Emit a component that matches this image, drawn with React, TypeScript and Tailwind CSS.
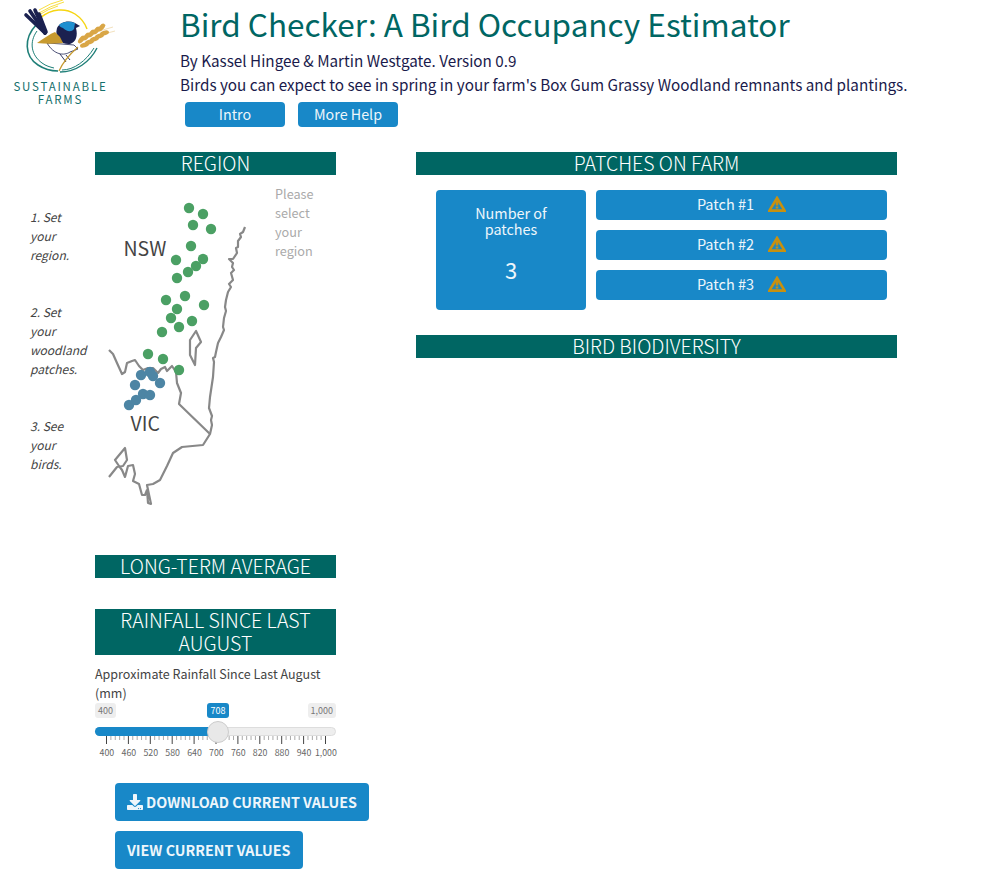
import React from "react";
import { FaDownload } from "react-icons/fa";

const FONT = '"Noto Sans CJK SC", "Noto Sans", sans-serif';

const green: [number, number][] = [[189,208],[203,214],[193,225],[211,229],[191,246],[176,260],[203,259],[196,266],[188,272],[177,278],[185,296],[166,300],[204,305],[177,309],[171,318],[192,321],[179,327],[162,332],[148,354],[163,359],[179,370]];
const blue: [number, number][] = [[141,375],[150,372],[153,376],[160,383],[135,385],[143,394],[150,395],[136,400],[129,405]];

const grains: [number, number][] = [[83,43],[88,40],[93,37],[98,34],[103,31]];

function Logo() {
  return (
    <svg viewBox="0 0 120 76" className="block w-[120px] h-[76px]">
      <g fill="none" stroke="#f6d512">
        <path d="M39 10 Q50 3 63 0" strokeWidth="0.8" />
        <path d="M39 13 Q50 6 64 2" strokeWidth="0.8" />
        <path d="M39 15 Q48 9 58 6" strokeWidth="0.8" />
        <path d="M40 18 C52 8 66 8 75 14 C81 18 85 23 87 29" strokeWidth="1.5" />
      </g>
      <g fill="none" stroke="#1f7f78">
        <path d="M36 25 C24 38 24 56 38 65 C44 69 51 71 58 71" strokeWidth="1.6" />
        <path d="M37 31 C29 42 31 55 42 63 C46 66 50 67 54 68" strokeWidth="1" />
        <path d="M60 72 C76 72 90 62 97 48" strokeWidth="1.4" />
        <path d="M62 70 C74 70 86 61 94 48" strokeWidth="1" />
      </g>
      <g stroke="#1b2150" strokeWidth="3.6" strokeLinecap="round" fill="none">
        <path d="M45 33 L26 15" />
        <path d="M45 33 L30 11" />
        <path d="M45 33 L35 10" />
        <path d="M46 32 L39 14" />
      </g>
      <path d="M47 43 C54 55 64 56 70 52 L78 49 L74 45 L62 44 Z" fill="#fff" stroke="#1b2150" strokeWidth="0.8" />
      <path d="M60 54 L66 62 M66 55 L70 60" stroke="#1b2150" strokeWidth="0.9" fill="none" />
      <path d="M57 28 C60 22 68 20 75 23 L80 26 L76 28 C78 36 76 42 70 44 C62 45 54 38 57 28 Z" fill="#1b2150" />
      <path d="M59 25 C63 21 70 21 75 23 L74 29 C71 33 66 31 63 28 C61 27 60 27 59 25 Z" fill="#1f8fd0" />
      <path d="M37 43 C44 38 50 34 55 32 L60 37 L63 43 C54 44 45 44 37 43 Z" fill="#c79a2f" />
      <path d="M59 71 C63 62 70 54 78 47" fill="none" stroke="#c79a2f" strokeWidth="1.2" />
      <g stroke="#ecd3a0" strokeWidth="0.7" fill="none">
        <path d="M90 33 L106 25 M96 32 L113 27 M100 35 L115 31" />
      </g>
      {grains.map(([x, y], i) => (
        <g key={i} fill="#d9a646">
          <ellipse cx={x - 1.5} cy={y - 3.5} rx="4.6" ry="2.4" transform={`rotate(-50 ${x - 1.5} ${y - 3.5})`} />
          <ellipse cx={x + 1.5} cy={y + 2} rx="4.6" ry="2.4" transform={`rotate(-15 ${x + 1.5} ${y + 2})`} />
        </g>
      ))}
    </svg>
  );
}

function Heading({ children }: { children: React.ReactNode }) {
  return (
    <div className="flex flex-col bg-[#006663] text-white text-center text-[19.5px] leading-[23px] font-light px-[2px] pb-[1px]">
      <div className="-mt-[1px]">{children}</div>
    </div>
  );
}

function PatchButton({ n }: { n: number }) {
  return (
    <div className="h-[30px] pb-[2px] rounded-[4px] bg-[#1888c8] flex items-center justify-center text-[#eef6fb] text-[14.5px]">
      <span>Patch #{n}</span>
      <svg viewBox="0 0 18 16" className="w-[18px] h-[16px] ml-[14px]">
        <path d="M9 2 L16.6 14.6 L1.4 14.6 Z" fill="none" stroke="#c8900f" strokeWidth="2.6" strokeLinejoin="miter" />
        <path d="M9 5 L9 9.5" stroke="#c8900f" strokeWidth="2.6" />
        <rect x="7.7" y="10.5" width="2.6" height="2" fill="#c8900f" />
      </svg>
    </div>
  );
}

function Ticks() {
  const items = [];
  for (let i = 0; i <= 50; i++) {
    const major = i % 5 === 0;
    const x = 0.5 + i * 4.38;
    items.push(<line key={i} x1={x} x2={x} y1={0} y2={major ? 8 : 4} stroke={major ? "#444" : "#aaa"} strokeWidth="1" />);
  }
  return (
    <svg className="block w-[220px] h-[8px] ml-[11px]" viewBox="0 0 220 8">{items}</svg>
  );
}

function RegionMap() {
  return (
    <svg viewBox="95 175 180 370" className="block w-[180px] h-[370px] shrink-0">
      <g fill="none" stroke="#888" strokeWidth="2.2" strokeLinejoin="round">
        <path d="M245 227 L243 232 L240 234 L241 237 L238 241 L238 247 L236 248 L237 253 L233 259 L229 259 L233 263 L232 267 L234 270 L231 273 L233 280 L229 284 L231 287 L228 292 L226 300 L225 307 L226 311 L224 318 L223 327 L224 330 L221 337 L218 343 L216 352 L215 357 L213 358 L214 362 L213 377 L210 397 L209 408 L212 416 L211 420 L212 425 L210 434 L203 445 L182 447 L173 453 L167 466 L160 480 L153 484 L147 485 L151 504 L148 503 L147 490 L145 495 L142 495 L139 484 L133 481 L135 474 L133 465 L128 466 L125 477 L122 470 L119 466 L115 460 L125 448 L127 460 L123 466 L117 467 L109 477" />
        <path d="M109 350 L113 354 L117 363 L122 374 L125 372 L127 363 L132 361 L135 360 L139 366 L143 370 L148 368 L153 368 L158 373 L161 369 L165 367 L167 371 L172 366 L176 372 L177 383 L181 393 L179 404 L210 434" />
        <path d="M196 331 L190 340 L190 355 L195 365 L196 348 L201 342 Z" />
      </g>
      {green.map(([x, y], i) => <circle key={i} cx={x} cy={y} r="5.2" fill="#4ba064" />)}
      {blue.map(([x, y], i) => <circle key={i} cx={x} cy={y} r="5.2" fill="#4d85a4" />)}
      <text x="123.5" y="256" fontSize="19.5" fill="#444" fontFamily={FONT}>NSW</text>
      <text x="130.5" y="431" fontSize="19.5" fill="#444" fontFamily={FONT}>VIC</text>
    </svg>
  );
}

export default function App() {
  const ticks = ["400","460","520","580","640","700","760","820","880","940","1,000"];
  return (
    <div className="w-[992px] h-[874px] overflow-hidden bg-white" style={{ fontFamily: FONT }}>
      <header className="flex h-[152px]">
        <div className="w-[180px] shrink-0">
          <Logo />
          <div className="w-[121px] text-center text-[#14706c] text-[11.5px] leading-[13px] tracking-[1.8px] mt-[4px]">
            SUSTAINABLE<br />FARMS
          </div>
        </div>
        <div>
          <h1 className="text-[31.5px] leading-[46px] mb-[2px] text-[#006663]">Bird Checker: A Bird Occupancy Estimator</h1>
          <p className="text-[15.25px] leading-[24px] text-[#1a1a4b]">By Kassel Hingee &amp; Martin Westgate. Version 0.9</p>
          <p className="text-[15.25px] leading-[24px] text-[#1a1a4b]">Birds you can expect to see in spring in your farm's Box Gum Grassy Woodland remnants and plantings.</p>
          <div className="flex gap-[13px] ml-[5px] mt-[6px]">
            <div className="w-[100px] h-[25px] rounded-[4px] bg-[#1888c8] text-[#eef6fb] text-[14.3px] leading-[24px] text-center">Intro</div>
            <div className="w-[100px] h-[25px] rounded-[4px] bg-[#1888c8] text-[#eef6fb] text-[14.3px] leading-[24px] text-center">More Help</div>
          </div>
        </div>
      </header>
      <main className="flex">
        <div className="w-[416px] shrink-0">
          <div className="flex pl-[30px]">
            <div className="w-[65px] shrink-0 pt-[55px] text-[12px] leading-[19px] italic text-[#444] flex flex-col gap-[38px]">
              <div className="w-[40px]">1. Set your region.</div>
              <div className="w-[58px]">2. Set your woodland patches.</div>
              <div className="w-[40px]">3. See your birds.</div>
            </div>
            <div className="w-[241px] shrink-0">
              <Heading>REGION</Heading>
              <div className="flex h-[380px]">
                <RegionMap />
                <div className="pt-[9px] text-[12.7px] leading-[19px] text-[#aaa] w-[50px]">Please select your region</div>
              </div>
            </div>
          </div>
          <div className="ml-[95px] w-[241px]">
            <Heading>LONG-TERM AVERAGE</Heading>
            <div className="h-[31px]" />
            <Heading>RAINFALL SINCE LAST AUGUST</Heading>
            <div className="mt-[9px] text-[12.5px] leading-[19px] text-[#444]">Approximate Rainfall Since Last August (mm)</div>
            <div className="flex justify-between items-start text-[9px] leading-[15px] mt-[1px] relative">
              <span className="bg-[#eee] rounded-[3px] px-[3px] text-[#777]">400</span>
              <span className="bg-[#eee] rounded-[3px] px-[3px] text-[#777]">1,000</span>
              <span className="absolute left-[112px] top-0 w-[22px] text-center bg-[#1888c8] rounded-[3px] text-white">708</span>
            </div>
            <div className="relative h-[9px] mt-[9px] rounded-full bg-[#eee] border border-[#ddd]">
              <div className="absolute -left-px -top-px h-[9px] w-[123px] rounded-l-full bg-[#1888c8]" />
              <div className="absolute left-[111px] top-[-7px] w-[22px] h-[22px] rounded-full bg-[#e8e8e8] border border-[#ccc]" />
            </div>
            <Ticks />
            <div className="flex mt-[2px] ml-[1px] text-[8.8px] leading-[14px] text-[#666]">
              {ticks.map((t) => <div key={t} className="w-[21.9px] text-center shrink-0">{t}</div>)}
            </div>
          </div>
          <div className="ml-[115px] mt-[23px] flex flex-col items-start gap-[10px]">
            <div className="h-[38px] pb-[1px] rounded-[4px] bg-[#1888c8] text-[#eef6fb] font-bold text-[14.3px] flex items-center px-[12px]">
              <FaDownload className="w-[16px] h-[16px] mr-[3px]" />DOWNLOAD CURRENT VALUES
            </div>
            <div className="h-[38px] pb-[1px] rounded-[4px] bg-[#1888c8] text-[#eef6fb] font-bold text-[14.3px] flex items-center px-[12px]">
              VIEW CURRENT VALUES
            </div>
          </div>
        </div>
        <div className="w-[481px] shrink-0">
          <Heading>PATCHES ON FARM</Heading>
          <div className="flex pl-[20px] pr-[10px] pt-[15px] gap-[10px]">
            <div className="w-[150px] h-[120px] shrink-0 rounded-[4px] bg-[#1888c8] text-[#eef6fb] text-center px-[20px] pt-[15px]">
              <div className="text-[14.4px] leading-[16px]">Number of patches</div>
              <div className="text-[22px] leading-[30px] mt-[17px]">3</div>
            </div>
            <div className="flex-1 flex flex-col gap-[10px]">
              <PatchButton n={1} />
              <PatchButton n={2} />
              <PatchButton n={3} />
            </div>
          </div>
          <div className="mt-[25px]"><Heading>BIRD BIODIVERSITY</Heading></div>
        </div>
      </main>
    </div>
  );
}
